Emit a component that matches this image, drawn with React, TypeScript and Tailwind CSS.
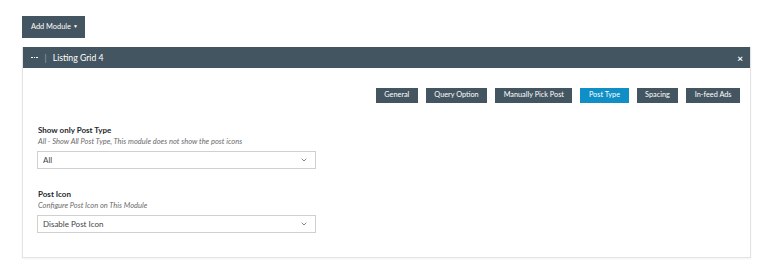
import { ChevronDown } from "lucide-react";

const tabs = ["General", "Query Option", "Manually Pick Post", "Post Type", "Spacing", "In-feed Ads"];

function Field({ label, hint, value }: { label: string; hint: string; value: string }) {
    return (
        <div className="flex flex-col">
            <div className="text-[8px] font-bold text-[#23282d] leading-[11px] pl-[1px]">{label}</div>
            <div className="text-[7.5px] italic text-[#6b6b6b] leading-[11px] pl-[1px]">{hint}</div>
            <div className="mt-[4px] w-[279px] h-[18px] border border-[#d0d0d0] bg-white flex items-center justify-between pl-[5px] pr-[7px]">
                <span className="text-[8px] text-[#444]">{value}</span>
                <ChevronDown size={8} strokeWidth={2.2} className="text-[#555]" />
            </div>
        </div>
    );
}

export default function App() {
    return (
        <div className="w-[773px] h-[275px] bg-white pt-[16px] px-[22px] font-['Lato',sans-serif]">
            <button
                type="button"
                className="h-[22px] pl-[9px] pr-[7px] bg-[#435560] text-white text-[7.4px] flex items-center gap-[2px]"
            >
                Add Module
                <span className="text-[5px]">▼</span>
            </button>

            <div className="mt-[9px] w-[729px] border border-[#e3e3e3] border-t-0 shadow-[0_1px_2px_rgba(0,0,0,0.05)]">
                <div className="h-[21px] bg-[#435560] flex items-center pl-[8px] pr-[7px] text-white text-[8.7px]">
                    <span className="flex gap-[1px]">
                        <span className="size-[1.5px] bg-white" />
                        <span className="size-[1.5px] bg-white" />
                        <span className="size-[1.5px] bg-white" />
                    </span>
                    <span className="ml-[7px] mr-[6px] text-[#9aa5ab]">|</span>
                    <span>Listing Grid 4</span>
                    <span className="ml-auto text-[10px] font-bold leading-none">×</span>
                </div>

                <div className="pt-[20px] pb-[24px] pl-[14px] pr-[10px]">
                    <div className="flex justify-end gap-[8px]">
                        {tabs.map((t) => (
                            <button
                                key={t}
                                type="button"
                                className={
                                    "h-[15px] px-[8.5px] text-[7.3px] text-white flex items-center " +
                                    (t === "Post Type" ? "bg-[#0f8fc6]" : "bg-[#435560]")
                                }
                            >
                                {t}
                            </button>
                        ))}
                    </div>

                    <div className="mt-[22px] flex flex-col gap-[20px]">
                        <Field
                            label="Show only Post Type"
                            hint="All - Show All Post Type, This module does not show the post icons"
                            value="All"
                        />
                        <Field label="Post Icon" hint="Configure Post Icon on This Module" value="Disable Post Icon" />
                    </div>
                </div>
            </div>
        </div>
    );
}
